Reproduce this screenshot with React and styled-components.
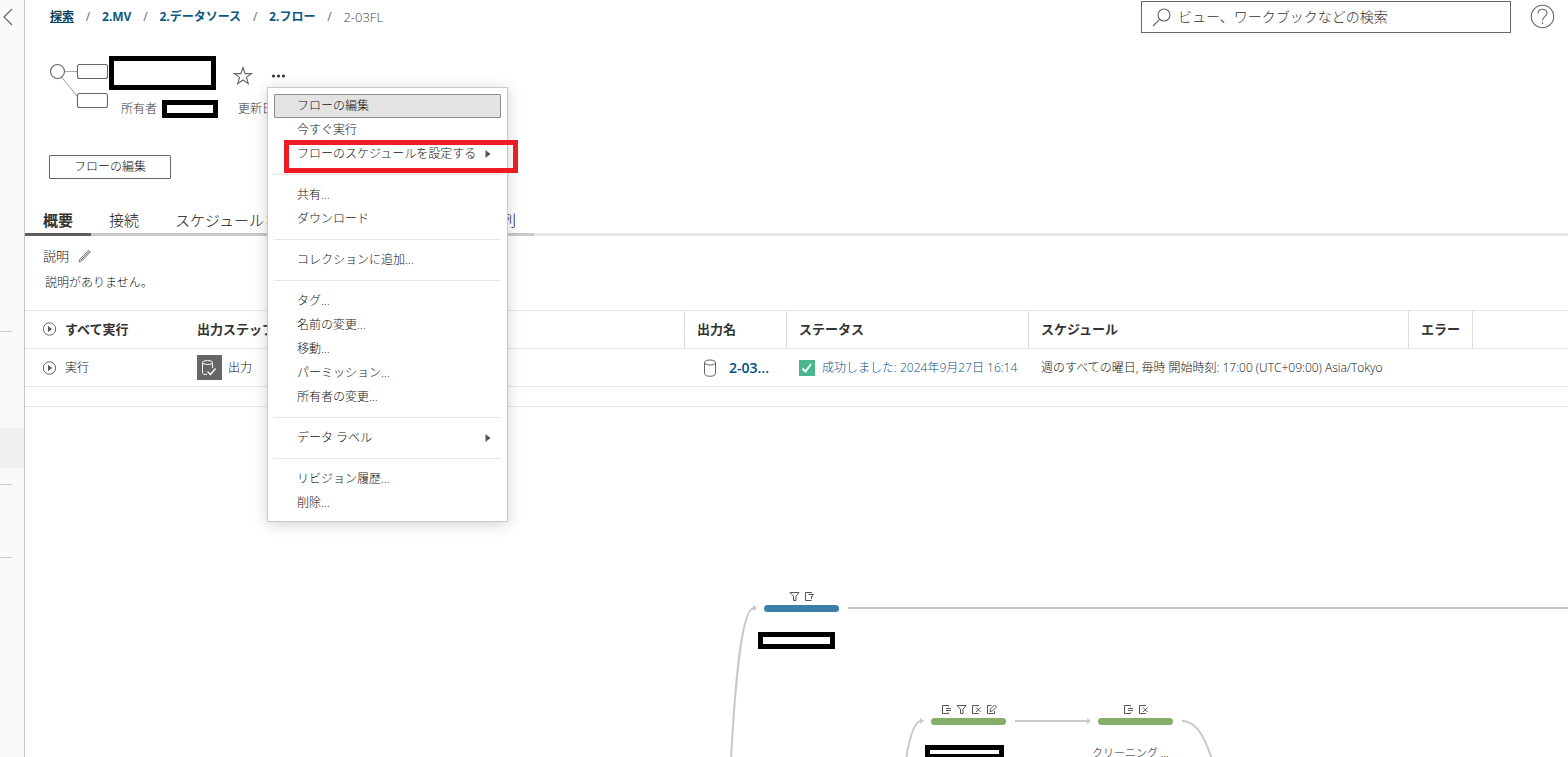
import React from 'react';
import styled, { createGlobalStyle, css } from 'styled-components'

const GlobalStyle = createGlobalStyle`
    * {
        box-sizing: border-box;
    }
    body {
        margin: 0;
        background: #ffffff;
        color: #111111;
        font-family: "Open Sans", "Noto Sans CJK JP", sans-serif;
        font-size: 12px;
        font-weight: 300;
        line-height: 16px;
    }
    button, input, table {
        font: inherit;
        color: inherit;
    }
    button {
        padding: 0;
        border: 0;
        background: none;
        cursor: pointer;
    }
    svg {
        display: block;
        flex: none;
    }
`

const Page = styled.div`
    display: flex;
    height: 100vh;
    overflow: hidden;
`

const Sidebar = styled.aside`
    flex: none;
    width: 25px;
    background: #fafafa;
    border-right: 1px solid #c8c8c8;
`

const CollapseButton = styled.button`
    display: block;
    padding: 8px 3px;
    height: 34px;
`

const SideGroup = styled.div`
    height: ${props => props.$height}px;
    width: 12px;
    border-bottom: 1px solid #cccccc;
`

const SideCurrent = styled.div`
    height: 40px;
    margin-top: 96px;
    background: #f0f0f0;
`

const Main = styled.main`
    position: relative;
    flex: 1;
    min-width: 0;
    display: flex;
    flex-direction: column;
`

const TopBar = styled.header`
    display: flex;
    align-items: center;
    justify-content: space-between;
    padding: 1px 13px 0 25px;
`

const Crumbs = styled.nav`
    display: flex;
    align-items: center;
    color: #666666;
    a {
        color: #0b5a82;
        font-weight: 700;
        text-decoration: none;
    }
    a:first-child {
        color: #0b3f5e;
        text-decoration: underline;
    }
    span {
        color: #444444;
        font-size: 13px;
    }
`

const Slash = styled.i`
    width: 28px;
    text-align: center;
    font-style: normal;
    font-weight: 400;
`

const TopTools = styled.div`
    display: flex;
    align-items: flex-start;
    gap: 19px;
    height: 32px;
    button {
        margin-top: 3px;
    }
`

const SearchBox = styled.label`
    display: flex;
    align-items: center;
    gap: 7px;
    width: 370px;
    height: 32px;
    padding: 0 10px;
    border: 1px solid #666666;
    input {
        flex: 1;
        min-width: 0;
        padding: 0;
        border: 0;
        outline: 0;
        font-size: 14px;
        background: none;
    }
    input::placeholder {
        color: #333333;
        opacity: 1;
    }
`

const Title = styled.section`
    display: flex;
    align-items: flex-start;
    padding: 23px 24px 0 24px;
`

const TitleIcon = styled.div`
    padding-top: 7px;
`

const TitleRow = styled.div`
    display: flex;
    align-items: center;
    height: 34px;
    button {
        margin-top: 6px;
    }
`

const StarButton = styled.button`
    margin-left: 17px;
`

const MoreButton = styled.button`
    margin-left: 18px;
`

const Redacted = styled.div`
    flex: none;
    width: ${props => props.$width}px;
    height: ${props => props.$height}px;
    border: 5px solid #000000;
    background: #ffffff;
`

const Meta = styled.div`
    display: flex;
    align-items: center;
    gap: 5px;
    margin: 10px 0 0 12px;
    color: #333333;
    span + div + span {
        margin-left: 15px;
    }
`

const EditButton = styled.button`
    align-self: flex-start;
    width: 122px;
    height: 24px;
    margin: 37px 0 0 24px;
    border: 1px solid #666666;
    border-radius: 1px;
    line-height: 20px;
`

const TabBar = styled.div`
    display: flex;
    margin-top: 29px;
    box-shadow: inset 0 -3px 0 #e6e6e6;
`

const Tab = styled.button`
    height: 28px;
    padding: 0 18px 2px;
    border-bottom: 3px solid ${props => props.$active ? '#5c5c5c' : '#c8c8c8'};
    font-size: 15px;
    line-height: 20px;
    ${props => props.$active && css`
        color: #333333;
        font-weight: 700;
    `}
`

const Description = styled.section`
    padding: 12px 18px 19px;
    h2 {
        display: flex;
        align-items: center;
        gap: 9px;
        margin: 0;
        font-size: 13px;
        font-weight: inherit;
    }
    p {
        margin: 11px 0 0 2px;
    }
`

const Outputs = styled.table`
    width: 100%;
    table-layout: fixed;
    border-collapse: separate;
    border-spacing: 0;
    border-top: 1px solid #e6e6e6;
    th, td {
        height: 38px;
        padding: 0 12px;
        border-bottom: 1px solid #e6e6e6;
        text-align: left;
        white-space: nowrap;
    }
    th {
        padding-bottom: 2px;
        color: #333333;
        font-size: 13px;
        font-weight: 700;
        border-right: 1px solid #dcdcdc;
    }
    th:first-child, th:last-child {
        border-right: 0;
    }
    th:first-child, td:first-child {
        padding-left: 18px;
    }
    a {
        color: #004f86;
        text-decoration: none;
    }
`

const TableWrap = styled.div`
    padding-bottom: 19px;
    border-bottom: 1px solid #e6e6e6;
`

const Cell = styled.span`
    display: flex;
    align-items: center;
    gap: ${props => props.$gap || 7}px;
`

const RunButton = styled.button`
    display: flex;
    align-items: center;
    gap: 8px;
    font-weight: inherit;
`

const NameLink = styled.a`
    font-size: 14px;
    font-weight: 600;
`

const Canvas = styled.section`
    position: relative;
    flex: 1;
    min-height: 0;
    overflow: hidden;
`

const Edges = styled.svg`
    position: absolute;
    top: 0;
    left: 0;
    width: 100%;
    height: 100%;
    fill: none;
    stroke: #c8c8c8;
    stroke-width: 2;
`

const Node = styled.div`
    position: absolute;
    left: ${props => props.$x}px;
    top: ${props => props.$y}px;
    width: 87px;
    display: flex;
    flex-direction: column;
    align-items: flex-start;
    font-size: 11px;
`

const NodeIcons = styled.div`
    display: flex;
    justify-content: center;
    gap: 4px;
    width: 75px;
    margin-left: 6px;
`

const NodeBar = styled.div`
    width: 75px;
    height: 7px;
    margin: 3px 0 20px 6px;
    border-radius: 4px;
    background: ${props => props.$color};
`

const Menu = styled.div`
    position: absolute;
    left: 242px;
    top: 87px;
    width: 241px;
    padding: 6px;
    border: 1px solid #c8c8c8;
    background: #ffffff;
    box-shadow: 0 2px 14px rgba(0, 0, 0, 0.18);
    hr {
        margin: 8px 0;
        border: 0;
        border-top: 1px solid #e6e6e6;
    }
`

const MenuItem = styled.button`
    display: flex;
    align-items: center;
    justify-content: space-between;
    width: 100%;
    height: 24px;
    padding: 0 9px 0 22px;
    border: 1px solid transparent;
    border-radius: 1px;
    ${props => props.$active && css`
        border-color: #8c8c8c;
        background: #e3e3e3;
    `}
`

const Highlight = styled.div`
    position: absolute;
    left: 259px;
    top: 140px;
    width: 234px;
    height: 33px;
    border: 5px solid #ed1c24;
    pointer-events: none;
`

const PlayIcon = () => (
    <svg width="14" height="14" viewBox="0 0 14 14">
        <circle cx="6.5" cy="7" r="6.2" fill="none" stroke="#666" />
        <path d="M5 4L9 7L5 10Z" fill="#555" />
    </svg>
)

const SubArrow = () => (
    <svg width="6" height="8" viewBox="0 0 6 8">
        <path d="M0.5 0L5.5 4L0.5 8Z" fill="#555" />
    </svg>
)

const ICONS = {
    filter: 'M1 1.5H10L7 5.2V9.5H4.5V5.2Z',
    keepFilter: 'M7.5 2.5V1.5H1.5V9.5H7.5M4.5 3.5H9.5L7.5 6V8V5',
    rename: 'M7.5 2.5V1.5H1.5V9.5H7.5V8.5M5 4.5H10M5 6.5H10',
    remove: 'M7.5 2V1.5H1.5V9.5H7.5V9M5 3.5L9.5 8M9.5 3.5L5 8',
    edit: 'M5.5 1.5H1.5V9.5H8.5V7M4 7.5L4.5 5L8.5 1L10.5 3L6.5 7Z',
}

const StepIcon = ({ name }) => (
    <svg width="11" height="11" viewBox="0 0 11 11">
        <path d={ICONS[name]} fill="none" stroke="#555" />
    </svg>
)

const menuGroups = [
    [{ label: 'フローの編集', active: true }, { label: '今すぐ実行' }, { label: 'フローのスケジュールを設定する', sub: true }],
    [{ label: '共有...' }, { label: 'ダウンロード' }],
    [{ label: 'コレクションに追加...' }],
    [{ label: 'タグ...' }, { label: '名前の変更...' }, { label: '移動...' }, { label: 'パーミッション...' }, { label: '所有者の変更...' }],
    [{ label: 'データ ラベル', sub: true }],
    [{ label: 'リビジョン履歴...' }, { label: '削除...' }],
]

const tabs = ['概要', '接続', 'スケジュールされたタスク', '実行履歴', '系列']

class App extends React.Component {
    state = {
        tab: '概要',
        busca: ''
    }

    handleBusca = (event) => {
        this.setState({ busca: event.target.value })
    }

    render() {
        return (
            <Page>
                <GlobalStyle />
                <Sidebar>
                    <CollapseButton aria-label="折りたたむ">
                        <svg width="10" height="18" viewBox="0 0 10 18">
                            <path d="M9 1L1 9L9 17" fill="none" stroke="#666" strokeWidth="1.2" />
                        </svg>
                    </CollapseButton>
                    <SideGroup $height={298} />
                    <SideCurrent />
                    <SideGroup $height={17} />
                    <SideGroup $height={73} />
                </Sidebar>
                <Main>
                    <TopBar>
                        <Crumbs>
                            <a href="#explore">探索</a><Slash>/</Slash>
                            <a href="#mv">2.MV</a><Slash>/</Slash>
                            <a href="#data">2.データソース</a><Slash>/</Slash>
                            <a href="#flow">2.フロー</a><Slash>/</Slash>
                            <span>2-03FL</span>
                        </Crumbs>
                        <TopTools>
                            <SearchBox>
                                <svg width="19" height="19" viewBox="0 0 19 19" fill="none" stroke="#666" strokeWidth="1.1">
                                    <circle cx="12" cy="7" r="6" />
                                    <path d="M7.6 11.4L1 18" />
                                </svg>
                                <input aria-label="検索" placeholder="ビュー、ワークブックなどの検索" value={this.state.busca} onChange={this.handleBusca} />
                            </SearchBox>
                            <button aria-label="ヘルプ">
                                <svg width="25" height="25" viewBox="0 0 25 25" fill="none" stroke="#666" strokeWidth="1.1">
                                    <circle cx="12.5" cy="12.5" r="11.2" />
                                    <path d="M8 9.5C8 6.8 9.8 5.3 12.5 5.3S17 6.9 17 9.3C17 12.4 12.5 12.4 12.5 16.5" />
                                    <path d="M12.5 18.3V20" />
                                </svg>
                            </button>
                        </TopTools>
                    </TopBar>

                    <Title>
                        <TitleIcon>
                            <svg width="60" height="46" viewBox="0 0 60 46" fill="none" stroke="#666" strokeWidth="1.1">
                                <path d="M15.5 8.5H28M12.5 14L28 33" stroke="#aaa" />
                                <circle cx="8.5" cy="8.5" r="7" />
                                <rect x="28.5" y="1.5" width="30" height="14" rx="2" />
                                <rect x="28.5" y="30.5" width="30" height="14" rx="2" />
                            </svg>
                        </TitleIcon>
                        <div>
                            <TitleRow>
                                <Redacted $width={107} $height={34} />
                                <StarButton aria-label="お気に入り">
                                    <svg width="20" height="20" viewBox="0 0 20 20">
                                        <path d="M10 1.5L12.1 7.6H18.5L13.4 11.4L15.3 17.7L10 14L4.7 17.7L6.6 11.4L1.5 7.6H7.9Z" fill="none" stroke="#666" strokeWidth="1.1" />
                                    </svg>
                                </StarButton>
                                <MoreButton aria-label="その他">
                                    <svg width="15" height="4" viewBox="0 0 15 4" fill="#333">
                                        <circle cx="2.5" cy="2" r="1.6" />
                                        <circle cx="7.5" cy="2" r="1.6" />
                                        <circle cx="12.5" cy="2" r="1.6" />
                                    </svg>
                                </MoreButton>
                            </TitleRow>
                            <Meta>
                                <span>所有者</span>
                                <Redacted $width={56} $height={18} />
                                <span>更新日</span>
                            </Meta>
                        </div>
                    </Title>
                    <EditButton>フローの編集</EditButton>

                    <TabBar role="tablist">
                        {tabs.map(tab => (
                            <Tab key={tab} role="tab" aria-selected={this.state.tab === tab} $active={this.state.tab === tab} onClick={() => this.setState({ tab })}>{tab}</Tab>
                        ))}
                    </TabBar>

                    <Description>
                        <h2>
                            説明
                            <button aria-label="説明の編集">
                                <svg width="14" height="14" viewBox="0 0 14 14" fill="none" stroke="#777">
                                    <path d="M1 13L2 10L10.8 1.4L12.4 3L3.8 11.8ZM3 11L11.6 2.2" />
                                </svg>
                            </button>
                        </h2>
                        <p>説明がありません。</p>
                    </Description>

                    <TableWrap>
                        <Outputs>
                            <colgroup>
                                <col width="160" />
                                <col width="500" />
                                <col width="102" />
                                <col width="242" />
                                <col width="380" />
                                <col width="64" />
                                <col />
                            </colgroup>
                            <thead>
                                <tr>
                                    <th><RunButton><PlayIcon />すべて実行</RunButton></th>
                                    <th>出力ステップ</th>
                                    <th>出力名</th>
                                    <th>ステータス</th>
                                    <th>スケジュール</th>
                                    <th>エラー</th>
                                    <th></th>
                                </tr>
                            </thead>
                            <tbody>
                                <tr>
                                    <td><RunButton><PlayIcon />実行</RunButton></td>
                                    <td>
                                        <Cell $gap={6}>
                                            <svg width="25" height="25" viewBox="0 0 25 25" fill="none" stroke="#fff">
                                                <rect width="25" height="25" fill="#666" stroke="none" />
                                                <ellipse cx="10.5" cy="7.5" rx="5" ry="2" />
                                                <path d="M5.5 7.5V17.5C5.5 19 7 19.5 10 19.5M15.5 7.5V13" />
                                                <path d="M10.5 16.5L13.5 19.5L18.5 13.5" strokeWidth="1.4" />
                                            </svg>
                                            出力
                                        </Cell>
                                    </td>
                                    <td>
                                        <Cell $gap={7}>
                                            <svg width="25" height="18" viewBox="0 0 25 18" fill="none" stroke="#666">
                                                <ellipse cx="13" cy="3.5" rx="5.5" ry="2.5" />
                                                <path d="M7.5 3.5V14.5C7.5 18.2 18.5 18.2 18.5 14.5V3.5" />
                                            </svg>
                                            <NameLink href="#output">2-03...</NameLink>
                                        </Cell>
                                    </td>
                                    <td>
                                        <Cell>
                                            <svg width="16" height="16" viewBox="0 0 16 16">
                                                <rect width="16" height="16" fill="#48b78d" />
                                                <path d="M3.5 8.5L6.5 11.5L12 4" fill="none" stroke="#fff" strokeWidth="1.8" />
                                            </svg>
                                            <a href="#status">成功しました: 2024年9月27日 16:14</a>
                                        </Cell>
                                    </td>
                                    <td>週のすべての曜日, 毎時 開始時刻: 17:00 (UTC+09:00) Asia/Tokyo</td>
                                    <td></td>
                                    <td></td>
                                </tr>
                            </tbody>
                        </Outputs>
                    </TableWrap>

                    <Canvas>
                        <Edges>
                            <path d="M706 352C710 280 716 201 729 201M823 201H2400M881 352C885 328 890 314 896 314M990 314H1062M1157 314C1170 314 1178 326 1187 352" />
                            <path d="M728 198L732 201L728 204ZM895 311L899 314L895 317ZM1062 311L1066 314L1062 317Z" fill="#c8c8c8" stroke="none" />
                        </Edges>
                        <Node $x={733} $y={184}>
                            <NodeIcons><StepIcon name="filter" /><StepIcon name="keepFilter" /></NodeIcons>
                            <NodeBar $color="#3b7fa8" />
                            <Redacted $width={77} $height={17} />
                        </Node>
                        <Node $x={900} $y={297}>
                            <NodeIcons><StepIcon name="rename" /><StepIcon name="filter" /><StepIcon name="remove" /><StepIcon name="edit" /></NodeIcons>
                            <NodeBar $color="#85ae68" />
                            <Redacted $width={79} $height={14} />
                        </Node>
                        <Node $x={1067} $y={297}>
                            <NodeIcons><StepIcon name="rename" /><StepIcon name="remove" /></NodeIcons>
                            <NodeBar $color="#85ae68" />
                            クリーニング ...
                        </Node>
                    </Canvas>

                    <Menu>
                        {menuGroups.map((group, index) => (
                            <React.Fragment key={index}>
                                {index > 0 && <hr />}
                                {group.map(item => (
                                    <MenuItem key={item.label} $active={item.active}>
                                        {item.label}
                                        {item.sub && <SubArrow />}
                                    </MenuItem>
                                ))}
                            </React.Fragment>
                        ))}
                    </Menu>
                    <Highlight />
                </Main>
            </Page>
        )
    }
}

export default App;
